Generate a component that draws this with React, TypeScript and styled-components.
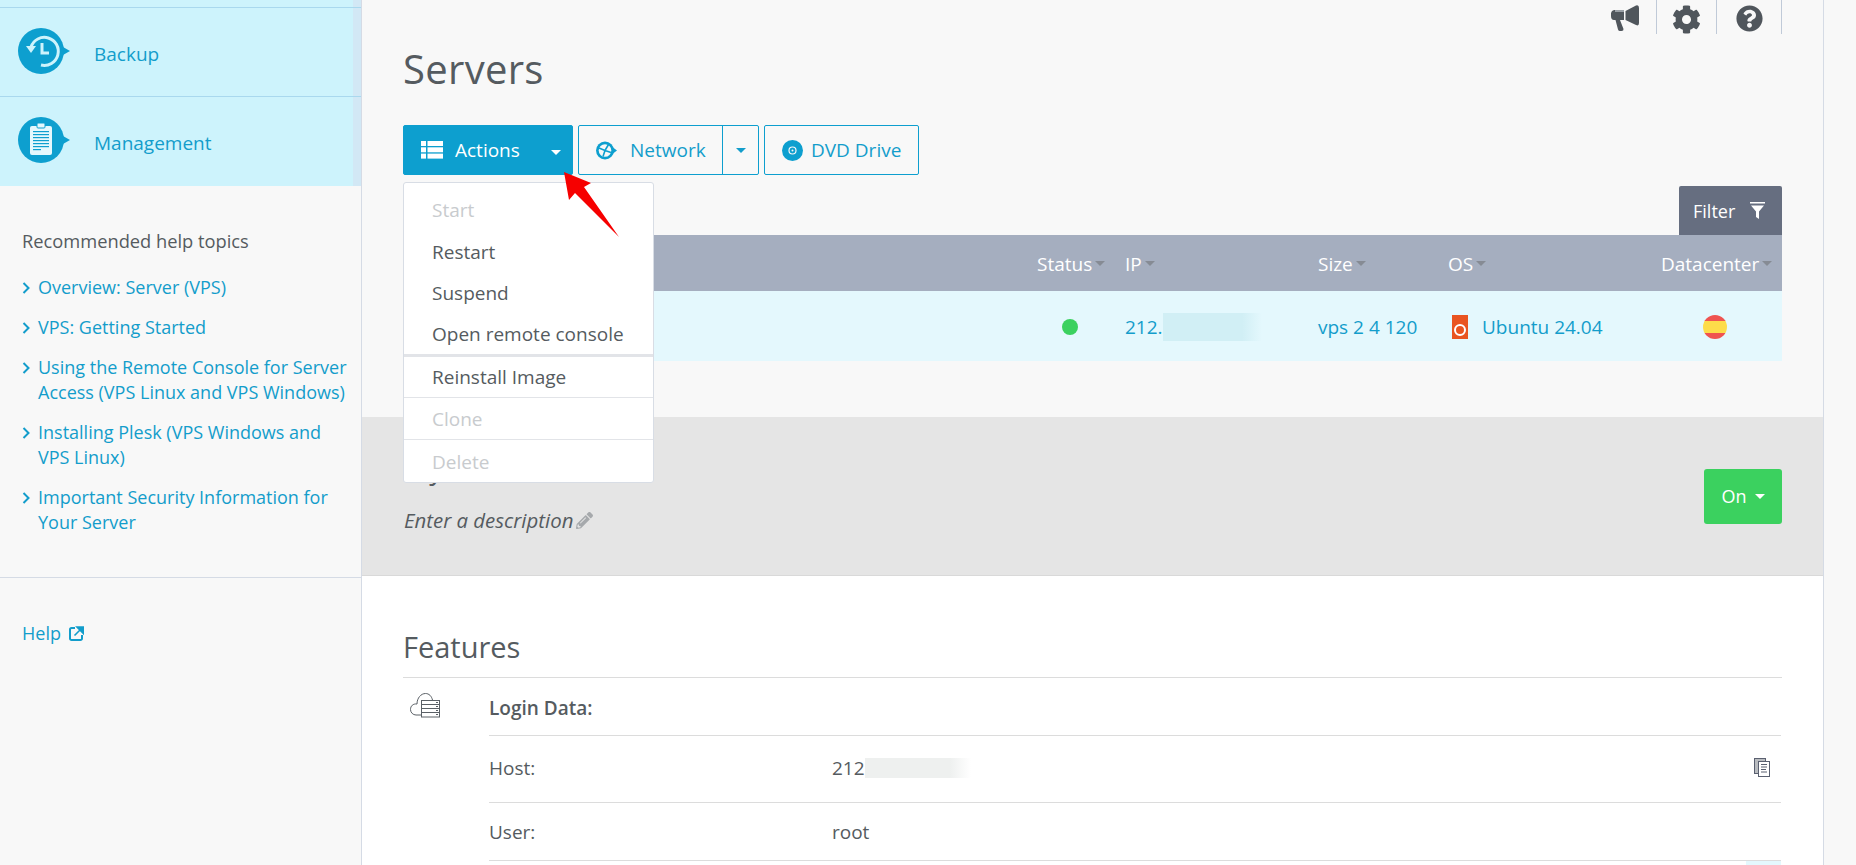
import React from "react";
import styled, { createGlobalStyle } from "styled-components";
import { FaCog, FaPencilAlt, FaQuestionCircle } from "react-icons/fa";

const BLUE = "#0d9fcf";
const LINK = "#139dcb";
const TEXT = "#555b60";

const GlobalStyle = createGlobalStyle`
  html, body {
    margin: 0;
    height: 100%;
    overflow: hidden;
    background: #f8f8f8;
    font-family: "Open Sans", "Liberation Sans", sans-serif;
    font-size: 19px;
    color: ${TEXT};
  }
  * { box-sizing: border-box; }
`;

const Page = styled.div`
  display: flex;
  height: 865px;
  overflow: hidden;
`;

const Sidebar = styled.aside`
  flex: 0 0 362px;
  border-right: 1px solid #d5dbe5;
  background: #f8f8f8;
  font-size: 18px;
`;

const NavList = styled.nav`
  background: #cdf3fc;
  padding-top: 7px;
  padding-bottom: 1px;
  box-shadow: inset -8px 0 0 #d2e8f5;
`;

const NavItem = styled.div`
  display: flex;
  align-items: center;
  height: 89px;
  padding: 0 0 3px 18px;
  gap: 24px;
  border-top: 1px solid #a9d8ee;
  color: ${LINK};
  font-size: 19px;
  line-height: 25px;
`;

const NavLabel = styled.span`
  padding-top: 8px;
`;

const HelpBlock = styled.section`
  padding: 42px 12px 42px 22px;
  border-bottom: 1px solid #d5dbe5;
`;

const HelpTitle = styled.div`
  font-size: 18.3px;
  line-height: 25px;
  margin-bottom: 22px;
`;

const HelpList = styled.ul`
  list-style: none;
  margin: 0;
  padding: 0;
  display: flex;
  flex-direction: column;
  gap: 15px;
`;

const HelpLink = styled.li`
  display: flex;
  align-items: flex-start;
  gap: 8px;
  color: ${LINK};
  line-height: 25px;

  svg {
    flex: none;
    margin-top: 7px;
  }
`;

const HelpFooter = styled.div`
  display: flex;
  align-items: center;
  gap: 8px;
  padding: 43px 22px;
  color: ${LINK};
  line-height: 25px;
`;

const Main = styled.main`
  flex: 0 0 1462px;
  border-right: 1px solid #d5dbe5;
`;

const TopSection = styled.section`
  height: 417px;
  padding: 0 41px;
  background: #f8f8f8;
`;

const TopBar = styled.div`
  display: flex;
  justify-content: flex-end;
  height: 34px;
`;

const TopIcon = styled.div<{ $width: number; $nudge?: number }>`
  display: flex;
  align-items: flex-start;
  justify-content: center;
  width: ${(p) => p.$width}px;
  padding-top: 5px;
  padding-right: ${(p) => p.$nudge ?? 0}px;
  border-right: 1px solid #c0cad8;
  color: #50565c;
`;

const PageTitle = styled.h1`
  margin: 0 0 36px;
  padding-top: 15px;
  font-size: 40px;
  font-weight: 400;
  line-height: 40px;
  letter-spacing: 0.3px;
`;

const ToolbarWrap = styled.div`
  position: relative;
`;

const Toolbar = styled.div`
  display: flex;
  gap: 5px;
  height: 50px;
`;

const ActionButton = styled.div<{ $width: number; $primary?: boolean }>`
  display: flex;
  align-items: center;
  width: ${(p) => p.$width}px;
  height: 50px;
  border: 1px solid ${BLUE};
  border-radius: 2px;
  background: ${(p) => (p.$primary ? BLUE : "transparent")};
  color: ${(p) => (p.$primary ? "#fff" : LINK)};
`;

const ButtonLabel = styled.span<{ $left: number; $gap: number }>`
  display: flex;
  align-items: center;
  flex: 1;
  height: 100%;
  padding-left: ${(p) => p.$left}px;
  gap: ${(p) => p.$gap}px;
`;

const SplitPart = styled.span`
  display: flex;
  align-items: center;
  justify-content: center;
  width: 36px;
  height: 100%;
  border-left: 1px solid ${BLUE};
`;

const Caret = styled.i<{ $color?: string; $size?: number }>`
  display: inline-block;
  flex: none;
  width: 0;
  height: 0;
  border-left: ${(p) => p.$size ?? 5}px solid transparent;
  border-right: ${(p) => p.$size ?? 5}px solid transparent;
  border-top: ${(p) => p.$size ?? 5}px solid ${(p) => p.$color ?? "currentColor"};
`;

const ActionsCaret = styled(Caret)`
  margin-left: auto;
  margin-right: 11px;
  margin-top: 4px;
`;

const Menu = styled.ul`
  position: absolute;
  top: 57px;
  left: 0;
  z-index: 5;
  width: 251px;
  margin: 0;
  padding: 7px 0 0;
  list-style: none;
  background: #fff;
  border: 1px solid #d8dde5;
  border-radius: 3px;
`;

const MenuItem = styled.li<{ $disabled?: boolean; $rule?: number }>`
  display: flex;
  align-items: center;
  height: ${(p) => (p.$rule ? 42 + (p.$rule === 3 ? 1 : 0) : 41)}px;
  padding-left: 28px;
  color: ${(p) => (p.$disabled ? "#c8cbce" : TEXT)};
  border-top: ${(p) => (p.$rule ? `${p.$rule}px solid #e2e4e8` : "none")};

  &:first-child {
    padding-bottom: 2px;
  }

  &:last-child {
    height: 43px;
    padding-top: 1px;
  }
`;

const MarkerArrow = styled.svg`
  position: absolute;
  top: 46px;
  left: 160px;
  z-index: 6;
`;

const FilterRow = styled.div`
  display: flex;
  justify-content: flex-end;
  margin-top: 11px;
`;

const FilterTab = styled.div`
  display: flex;
  align-items: center;
  gap: 15px;
  width: 103px;
  height: 49px;
  padding-left: 14px;
  background: #666e80;
  border-radius: 2px 2px 0 0;
  color: #fff;
  font-size: 18px;
`;

const tableColumns = "634px 88px 193px 130px 213px 1fr";

const TableHead = styled.div`
  display: grid;
  grid-template-columns: ${tableColumns};
  align-items: center;
  height: 56px;
  padding-top: 1px;
  background: #a5aebf;
  color: #fff;
`;

const HeadCell = styled.div`
  display: flex;
  align-items: center;
  gap: 3px;
`;

const TableRow = styled.div`
  display: grid;
  grid-template-columns: ${tableColumns};
  align-items: center;
  height: 70px;
  padding-top: 1px;
  background: #e4f8fd;
  color: ${LINK};
`;

const Cell = styled.div`
  display: flex;
  align-items: center;
`;

const StatusDot = styled.span`
  width: 16px;
  height: 16px;
  margin-left: 25px;
  border-radius: 50%;
  background: #3bd15f;
`;

const Redacted = styled.span<{ $color: string; $width: number; $height: number }>`
  display: inline-block;
  width: ${(p) => p.$width}px;
  height: ${(p) => p.$height}px;
  background: linear-gradient(90deg, ${(p) => p.$color} 80%, transparent);
`;

const UbuntuBadge = styled.span`
  display: flex;
  align-items: flex-end;
  justify-content: center;
  width: 16px;
  height: 24px;
  margin: 0 14px 0 4px;
  padding-bottom: 3px;
  background: #e95420;

  &::before {
    content: "";
    width: 8px;
    height: 8px;
    border: 2px solid #fff;
    border-radius: 50%;
  }
`;

const FlagBadge = styled.span`
  width: 24px;
  height: 24px;
  margin-left: 42px;
  border-radius: 50%;
  background: linear-gradient(#ef5350 25%, #fddc4a 25%, #fddc4a 75%, #ef5350 75%);
`;

const DescSection = styled.section`
  display: flex;
  align-items: center;
  justify-content: space-between;
  height: 159px;
  padding: 0 41px;
  background: #e5e5e5;
  border-bottom: 1px solid #d9d9d9;
`;

const DescBlock = styled.div`
  padding: 0 0 11px 1px;
`;

const DescHeading = styled.h2`
  margin: 0 0 19px;
  font-size: 28px;
  font-weight: 400;
  line-height: 40px;
`;

const DescLine = styled.div`
  display: flex;
  align-items: center;
  gap: 3px;
  font-size: 20.4px;
  font-style: italic;
  line-height: 26px;

  svg {
    color: #a6a9ac;
  }
`;

const PowerButton = styled.div`
  display: flex;
  align-items: center;
  justify-content: center;
  gap: 8px;
  width: 78px;
  height: 55px;
  background: #3bd15f;
  border-radius: 3px;
  color: #fff;
  font-size: 18px;
`;

const FeatureSection = styled.section`
  padding: 50px 41px 0;
  background: #fff;
  height: 290px;
`;

const FeatureTitle = styled.h2`
  margin: 0;
  padding-bottom: 9px;
  border-bottom: 1px solid #dcdcdc;
  font-size: 29px;
  font-weight: 400;
  line-height: 42px;
`;

const FeatureBody = styled.div`
  display: grid;
  grid-template-columns: 86px 1fr;
`;

const FeatureIcon = styled.div`
  padding: 15px 0 0 7px;
`;

const FeatureRows = styled.div`
  margin-right: 1px;
`;

const DataRow = styled.div<{ $height: number; $lift?: number }>`
  display: grid;
  grid-template-columns: 343px 1fr auto;
  align-items: center;
  height: ${(p) => p.$height}px;
  padding-bottom: ${(p) => p.$lift ?? 0}px;
  border-bottom: 1px solid #dcdcdc;
`;

const LoginTitle = styled.strong`
  font-weight: 600;
  padding-top: 3px;
`;

const HostValue = styled.span`
  display: flex;
  align-items: center;
`;

const CopyIconWrap = styled.span`
  display: flex;
  margin-right: 11px;
`;

const NextRowTag = styled.div`
  width: 35px;
  height: 20px;
  margin: 0 0 0 auto;
  background: #e4f8fd;
`;

const BackupIcon = () => (
  <svg width="52" height="46" viewBox="0 0 52 46">
    <circle cx="23" cy="23" r="23" fill={BLUE} />
    <path d="M45 19l7 4-7 4z" fill={BLUE} />
    <path d="M13 19a14 14 0 1 1 10 18" fill="none" stroke="#cdf3fc" strokeWidth="3" />
    <path d="M8 18h10l-5 7z" fill="#cdf3fc" />
    <path d="M24 15v10h7" fill="none" stroke="#cdf3fc" strokeWidth="3" />
  </svg>
);

const ManagementIcon = () => (
  <svg width="52" height="46" viewBox="0 0 52 46">
    <circle cx="23" cy="23" r="23" fill={BLUE} />
    <path d="M45 19l7 4-7 4z" fill={BLUE} />
    <rect x="12" y="9" width="22" height="29" rx="2" fill="#e4f8fd" />
    <rect x="19" y="6" width="8" height="5" rx="1" fill="#e4f8fd" stroke={BLUE} />
    {[14, 17, 20, 23, 26, 29].map((y) => (
      <rect key={y} x="15" y={y} width="16" height="1.2" fill={BLUE} />
    ))}
    <rect x="15" y="32" width="8" height="1.2" fill={BLUE} />
  </svg>
);

const Chevron = () => (
  <svg width="8" height="12" viewBox="0 0 8 12">
    <path d="M1.5 1l5 5-5 5" fill="none" stroke={LINK} strokeWidth="2" />
  </svg>
);

const ExternalIcon = () => (
  <svg width="15" height="15" viewBox="0 0 15 15">
    <path d="M6 2H2.5A1.5 1.5 0 0 0 1 3.5v9A1.5 1.5 0 0 0 2.5 14h9a1.5 1.5 0 0 0 1.5-1.5V9" fill="none" stroke={LINK} strokeWidth="2" />
    <path d="M5.5 9.5L12 3M8 1h6.5v6.5z" fill={LINK} stroke={LINK} strokeWidth="1.6" />
  </svg>
);

const MegaphoneIcon = () => (
  <svg width="28" height="26" viewBox="0 0 28 26">
    <path d="M1 6l2-1h10v10H9l3.5 9q.3 2-2 2H9q-1.5 0-2-1.5L4.5 15H3q-3 0-3-4V8z" fill="#50565c" />
    <rect x="4" y="5" width="9" height="2" fill="#9aa0a6" />
    <path d="M14.5 6L25 .5Q28-.5 28 3v15q0 3.5-3 2l-10.5-5z" fill="#50565c" />
  </svg>
);

const ListIcon = () => (
  <svg width="22" height="18" viewBox="0 0 22 18" fill="#fff">
    {[0, 6.3, 12.6].map((y) => (
      <React.Fragment key={y}>
        <rect x="0" y={y} width="5" height="5" />
        <rect x="6.5" y={y} width="15.5" height="5" />
      </React.Fragment>
    ))}
  </svg>
);

const GlobeIcon = () => (
  <svg width="21" height="19" viewBox="0 0 21 19">
    <circle cx="9" cy="9.5" r="9" fill={BLUE} />
    <path d="M17 6.5l4 3-4 3z" fill={BLUE} />
    <circle cx="9" cy="9.5" r="6.3" fill="#f8f8f8" />
    <path d="M3 7l6 2.5 3.5-6M9 9.5l-2 6M9 9.5l6 2" fill="none" stroke={BLUE} strokeWidth="1.6" />
  </svg>
);

const DiscIcon = () => (
  <svg width="21" height="21" viewBox="0 0 21 21">
    <circle cx="10.5" cy="10.5" r="10.5" fill={BLUE} />
    <circle cx="10.5" cy="10.5" r="3.5" fill="none" stroke="#f8f8f8" strokeWidth="1.2" />
    <circle cx="10.5" cy="10.5" r="1" fill="#f8f8f8" />
  </svg>
);

const FunnelIcon = () => (
  <svg width="15" height="17" viewBox="0 0 15 17" fill="#fff">
    <rect x="0" y="0" width="15" height="1.5" />
    <path d="M1 3.5h13l-5 6V17l-3-2V9.500z" />
  </svg>
);

const CloudServerIcon = () => (
  <svg width="30" height="25" viewBox="0 0 30 25" fill="none" stroke="#5a6066" strokeWidth="1">
    <path d="M11.5 22H6C3 22 .5 19.5 .5 16.5C.5 13 3 10.5 7 11C7 5 11 .5 15.5 .5C19 .5 21.5 3 22.5 7" />
    <rect x="11.5" y="7.5" width="18" height="16.5" fill="#fff" />
    <path d="M11.5 11.5h18M11.5 15.5h18M11.5 19.5h18" />
    <path d="M26 9.500h2M26 13.500h2M26 17.500h2M26 21.500h2" />
  </svg>
);

const CopyIcon = () => (
  <svg width="16" height="19" viewBox="0 0 16 19">
    <rect x=".5" y=".5" width="11" height="15" fill="#b9bcc0" stroke="#5a6070" />
    <rect x="4.5" y="3.5" width="11" height="15" fill="#fff" stroke="#5a6070" />
    <path d="M7 6.5h6M7 9h6M7 11.5h5M7 14h6" stroke="#5a6070" />
  </svg>
);

const NAV_ITEMS = [
  { label: "Backup", icon: <BackupIcon /> },
  { label: "Management", icon: <ManagementIcon /> },
];

const HELP_LINKS = [
  "Overview: Server (VPS)",
  "VPS: Getting Started",
  "Using the Remote Console for Server Access (VPS Linux and VPS Windows)",
  "Installing Plesk (VPS Windows and VPS Linux)",
  "Important Security Information for Your Server",
];

const MENU_ITEMS: { label: string; disabled?: boolean; rule?: number }[] = [
  { label: "Start", disabled: true },
  { label: "Restart" },
  { label: "Suspend" },
  { label: "Open remote console" },
  { label: "Reinstall Image", rule: 3 },
  { label: "Clone", disabled: true, rule: 1 },
  { label: "Delete", disabled: true, rule: 1 },
];

const COLUMNS = ["", "Status", "IP", "Size", "OS", "Datacenter"];

const App: React.FC = () => {
  return (
    <>
      <GlobalStyle />
      <Page>
        <Sidebar>
          <NavList>
            {NAV_ITEMS.map((item) => (
              <NavItem key={item.label}>
                {item.icon}
                <NavLabel>{item.label}</NavLabel>
              </NavItem>
            ))}
          </NavList>
          <HelpBlock>
            <HelpTitle>Recommended help topics</HelpTitle>
            <HelpList>
              {HELP_LINKS.map((link) => (
                <HelpLink key={link}>
                  <Chevron />
                  <span>{link}</span>
                </HelpLink>
              ))}
            </HelpList>
          </HelpBlock>
          <HelpFooter>
            Help <ExternalIcon />
          </HelpFooter>
        </Sidebar>

        <Main>
          <TopSection>
            <TopBar>
              <TopIcon $width={60} $nudge={4}>
                <MegaphoneIcon />
              </TopIcon>
              <TopIcon $width={60}>
                <FaCog size={29} />
              </TopIcon>
              <TopIcon $width={65}>
                <FaQuestionCircle size={27} />
              </TopIcon>
            </TopBar>
            <PageTitle>Servers</PageTitle>
            <ToolbarWrap>
              <Toolbar>
                <ActionButton $width={170} $primary>
                  <ButtonLabel $left={17} $gap={12}>
                    <ListIcon />
                    Actions
                  </ButtonLabel>
                  <ActionsCaret />
                </ActionButton>
                <ActionButton $width={181}>
                  <ButtonLabel $left={17} $gap={13}>
                    <GlobeIcon />
                    Network
                  </ButtonLabel>
                  <SplitPart>
                    <Caret />
                  </SplitPart>
                </ActionButton>
                <ActionButton $width={155}>
                  <ButtonLabel $left={17} $gap={8}>
                    <DiscIcon />
                    DVD Drive
                  </ButtonLabel>
                </ActionButton>
              </Toolbar>
              <Menu>
                {MENU_ITEMS.map((item) => (
                  <MenuItem key={item.label} $disabled={item.disabled} $rule={item.rule}>
                    {item.label}
                  </MenuItem>
                ))}
              </Menu>
              <MarkerArrow width="56" height="66" viewBox="0 0 56 66">
                <polygon points="1,1 28,12 21,16 56,66 12,22 6,29" fill="#f60000" />
              </MarkerArrow>
            </ToolbarWrap>
            <FilterRow>
              <FilterTab>
                Filter <FunnelIcon />
              </FilterTab>
            </FilterRow>
            <TableHead>
              {COLUMNS.map((column, index) => (
                <HeadCell key={index}>
                  {column}
                  {column && <Caret $color="#868b94" />}
                </HeadCell>
              ))}
            </TableHead>
            <TableRow>
              <Cell />
              <Cell>
                <StatusDot />
              </Cell>
              <Cell>
                212.
                <Redacted $color="#d1eff5" $width={99} $height={28} />
              </Cell>
              <Cell>vps 2 4 120</Cell>
              <Cell>
                <UbuntuBadge />
                Ubuntu 24.04
              </Cell>
              <Cell>
                <FlagBadge />
              </Cell>
            </TableRow>
          </TopSection>

          <DescSection>
            <DescBlock>
              <DescHeading>My Server</DescHeading>
              <DescLine>
                Enter a description
                <FaPencilAlt size={17} />
              </DescLine>
            </DescBlock>
            <PowerButton>
              On <Caret />
            </PowerButton>
          </DescSection>

          <FeatureSection>
            <FeatureTitle>Features</FeatureTitle>
            <FeatureBody>
              <FeatureIcon>
                <CloudServerIcon />
              </FeatureIcon>
              <FeatureRows>
                <DataRow $height={58}>
                  <LoginTitle>Login Data:</LoginTitle>
                </DataRow>
                <DataRow $height={67} $lift={3}>
                  <span>Host:</span>
                  <HostValue>
                    212
                    <Redacted $color="#eef0ef" $width={106} $height={20} />
                  </HostValue>
                  <CopyIconWrap>
                    <CopyIcon />
                  </CopyIconWrap>
                </DataRow>
                <DataRow $height={58}>
                  <span>User:</span>
                  <span>root</span>
                </DataRow>
                <NextRowTag />
              </FeatureRows>
            </FeatureBody>
          </FeatureSection>
        </Main>
      </Page>
    </>
  );
};

export default App;
